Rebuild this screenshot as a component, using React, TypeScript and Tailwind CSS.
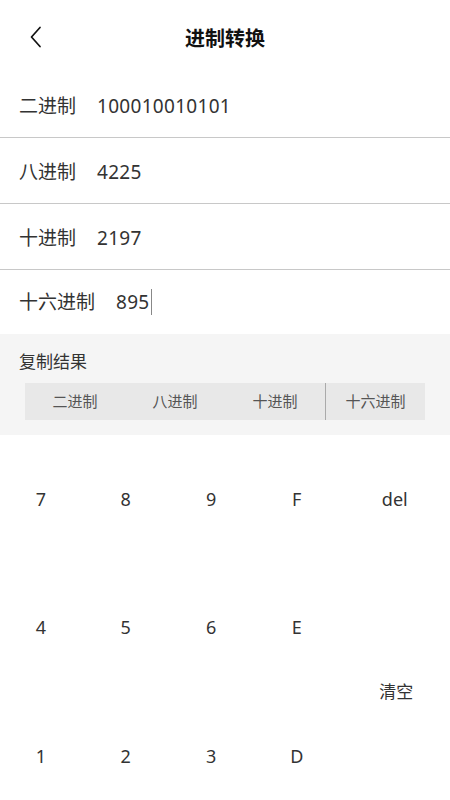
import React from 'react';

const rows = [
  { label: '二进制', value: '100010010101' },
  { label: '八进制', value: '4225' },
  { label: '十进制', value: '2197' },
  { label: '十六进制', value: '895', active: true },
];

const tabs = ['二进制', '八进制', '十进制', '十六进制'];

const keys = ['7', '8', '9', 'F', 'del', '4', '5', '6', 'E', '清空', '1', '2', '3', 'D'];

const App: React.FC = () => {
  return (
    <div
      className="w-[450px] h-[800px] overflow-hidden bg-white text-[#333]"
      style={{ fontFamily: '"Noto Sans", "Noto Sans CJK SC", sans-serif' }}
    >
      {/* header */}
      <div className="relative h-[72px] flex items-center justify-center pt-[6px]">
        <button className="absolute left-[26px] top-[24px] w-[20px] h-[26px] flex items-center justify-center">
          <svg width="14" height="22" viewBox="0 0 14 22" fill="none">
            <path d="M11 1.5 L2.5 11 L11 20.5" stroke="#111" strokeWidth="1.7" strokeLinecap="round" strokeLinejoin="round" />
          </svg>
        </button>
        <h1 className="text-[20px] font-bold text-[#111] leading-none">进制转换</h1>
      </div>

      {/* result rows */}
      <div>
        {rows.map((row, i) => (
          <div
            key={row.label}
            className={
              i < rows.length - 1
                ? 'h-[66px] flex items-center px-[19px] pt-[3px] text-[19px] border-b border-[#c8c8c8]'
                : 'h-[64px] flex items-center px-[19px] text-[19px]'
            }
          >
            <span className="mr-[21px]">{row.label}</span>
            <span className="tracking-[0.3px]">{row.value}</span>
            {row.active && <span className="w-px h-[26px] bg-[#888] ml-[1px]"></span>}
          </div>
        ))}
      </div>

      {/* copy section */}
      <div className="bg-[#f5f5f5] pt-[18px] pb-[15px]">
        <p className="px-[19px] text-[17px] leading-[20px] text-[#333]">复制结果</p>
        <div className="mx-[25px] mt-[11px] h-[37px] bg-[#e8e8e8] grid grid-cols-4 text-[15px] text-[#555]">
          {tabs.map((tab, i) => (
            <div
              key={tab}
              className={`flex items-center justify-center ${i === 3 ? 'border-l border-[#aaa]' : ''}`}
            >
              {tab}
            </div>
          ))}
        </div>
      </div>

      {/* keypad */}
      <div className="grid grid-cols-[84px_85.5px_85.5px_85.5px_1fr] grid-rows-[128.5px_128.5px_128.5px] text-[18px] text-[#333]">
        {keys.map((k) => (
          <div
            key={k}
            className={
              k === '清空'
                ? 'row-span-2 flex items-center justify-center text-[17px] pl-[2px]'
                : k === 'del'
                  ? 'flex items-center justify-center pr-[1px]'
                  : 'flex items-center justify-center pr-[2px]'
            }
          >
            {k}
          </div>
        ))}
      </div>
    </div>
  );
};

export default App;
